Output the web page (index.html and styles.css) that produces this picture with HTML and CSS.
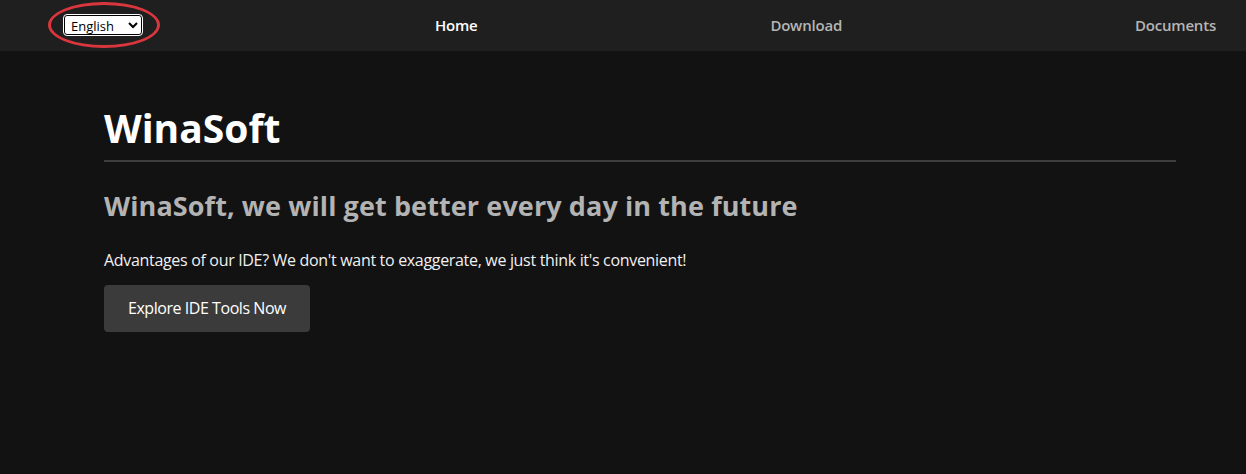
FILE: index.html
```html
<!DOCTYPE html>
<html lang="en">
<head>
<meta charset="utf-8">
<title>WinaSoft</title>
<link rel="stylesheet" href="styles.css">
</head>
<body>
<nav class="nav">
  <div class="lang-wrap">
    <select class="lang">
      <option>English</option>
    </select>
    <span class="ring"></span>
  </div>
  <a class="nav-link active" href="#">Home</a>
  <a class="nav-link" href="#">Download</a>
  <a class="nav-link" href="#">Documents</a>
</nav>
<main class="main">
  <h1 class="title">WinaSoft</h1>
  <h2 class="subtitle">WinaSoft, we will get better every day in the future</h2>
  <p class="lead">Advantages of our IDE? We don't want to exaggerate, we just think it's convenient!</p>
  <a class="btn" href="#">Explore IDE Tools Now</a>
</main>
</body>
</html>
```
FILE: styles.css
```css
* { box-sizing: border-box; }
html, body { margin: 0; padding: 0; }
body {
  background: #121212;
  color: #ffffff;
  font-family: "Open Sans", "Noto Sans", sans-serif;
  height: 474px;
  overflow: hidden;
}
.nav {
  height: 51px;
  background: #1f1f1f;
  display: flex;
  align-items: center;
  justify-content: space-between;
  padding: 0 30px 2px 64px;
}
.lang-wrap { position: relative; display: flex; }
.lang {
  width: 78px;
  height: 20px;
  font-family: "Open Sans", sans-serif;
  font-size: 13px;
  background: #fff;
  color: #000;
  border: 1px solid #000;
  outline: 1px solid #fff;
  border-radius: 3px;
  padding: 0 2px;
}
.ring {
  position: absolute;
  left: -16px;
  top: -13px;
  width: 112px;
  height: 46px;
  border: 3px solid #d9363e;
  border-radius: 50%;
  pointer-events: none;
}
.nav-link {
  color: #b5b5b5;
  text-decoration: none;
  font-size: 15px;
  font-weight: 600;
  letter-spacing: -0.2px;
}
.nav-link.active { color: #ffffff; }
.main {
  padding: 0 70px 0 104px;
}
.title {
  margin: 0;
  padding-top: 49px;
  font-size: 39px;
  font-weight: 700;
  line-height: 56px;
  letter-spacing: 0;
  padding-bottom: 4px;
  border-bottom: 2px solid #3d3d3d;
}
.subtitle {
  margin: 24px 0 0;
  font-size: 27px;
  font-weight: 700;
  line-height: 40px;
  color: #b3b3b3;
  letter-spacing: 0.1px;
}
.lead {
  margin: 22px 0 0;
  font-size: 16px;
  line-height: 24px;
  color: #f0f0f0;
  letter-spacing: -0.32px;
}
.btn {
  display: inline-block;
  margin-top: 13px;
  height: 47px;
  line-height: 47px;
  padding: 0 24px;
  background: #3b3b3b;
  color: #fff;
  text-decoration: none;
  border-radius: 4px;
  font-size: 16px;
  letter-spacing: -0.45px;
}
```
